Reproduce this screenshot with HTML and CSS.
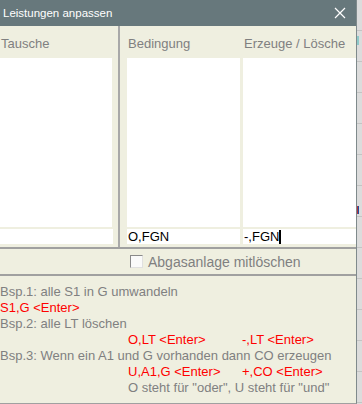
FILE: index.html
```html
<!DOCTYPE html>
<html lang="de">
<head>
    <meta charset="UTF-8">
    <title>Leistungen anpassen</title>
    <link rel="stylesheet" href="styles.css">
</head>
<body>
    <div class="screen">
        <div class="dialog">
            <div class="titlebar">
                <span class="title">Leistungen anpassen</span>
                <svg class="close" width="12" height="12" viewBox="0 0 12 12">
                    <path d="M1 1L11 11M11 1L1 11" stroke="#fff" stroke-width="1.2" fill="none"/>
                </svg>
            </div>

            <div class="panes">
                <div class="pane-left">
                    <div class="label">Tausche</div>
                    <div class="list list-left"></div>
                    <div class="field field-left"></div>
                </div>
                <div class="divider"></div>
                <div class="pane-right">
                    <div class="column">
                        <div class="label">Bedingung</div>
                        <div class="list"></div>
                        <div class="field">O,FGN</div>
                    </div>
                    <div class="column">
                        <div class="label">Erzeuge / Lösche</div>
                        <div class="list"></div>
                        <div class="field">-,FGN<span class="caret"></span></div>
                    </div>
                </div>
            </div>

            <div class="check-row">
                <span class="checkbox"></span>
                <span class="check-label">Abgasanlage mitlöschen</span>
            </div>

            <div class="help">
                <div class="line">Bsp.1: alle S1 in G umwandeln</div>
                <div class="line red">S1,G &lt;Enter&gt;</div>
                <div class="line">Bsp.2: alle LT löschen</div>
                <div class="line indent red">
                    <span class="cell">O,LT &lt;Enter&gt;</span>
                    <span class="cell">-,LT &lt;Enter&gt;</span>
                </div>
                <div class="line">Bsp.3: Wenn ein A1 und G vorhanden dann CO erzeugen</div>
                <div class="line indent red">
                    <span class="cell">U,A1,G &lt;Enter&gt;</span>
                    <span class="cell">+,CO &lt;Enter&gt;</span>
                </div>
                <div class="line indent">O steht für "oder", U steht für "und"</div>
            </div>
        </div>
        <div class="backdrop">
            <div class="bd-mark teal"></div>
            <div class="bd-mark mark-red"></div>
        </div>
    </div>
</body>
</html>
```
FILE: styles.css
```css
body {
    margin: 0;
    font-family: "Liberation Sans", Arial, sans-serif;
    font-size: 13px;
    background: #d9d9d9;
}

.screen {
    display: flex;
    height: 404px;
    overflow: hidden;
}

.dialog {
    width: 356px;
    height: 403px;
    background: #efefe0;
    border-right: 1px solid #7f8a8c;
    border-bottom: 1px solid #a0a0a0;
    display: flex;
    flex-direction: column;
}

.titlebar {
    height: 26px;
    background: #67787c;
    display: flex;
    align-items: center;
    justify-content: space-between;
    padding: 0 10px 0 3px;
}

.title {
    color: #fff;
    font-size: 11.5px;
}

.close {
    display: block;
}

.panes {
    display: flex;
    height: 221px;
}

.pane-left {
    width: 118px;
    display: flex;
    flex-direction: column;
}

.divider {
    width: 2px;
    background: #a8a8a8;
}

.pane-right {
    flex: 1;
    display: flex;
    gap: 3px;
    padding-left: 7px;
}

.column {
    width: 113px;
    display: flex;
    flex-direction: column;
}

.label {
    color: #808080;
    height: 32px;
    line-height: 36px;
    padding-left: 1px;
    white-space: nowrap;
}

.list {
    height: 169px;
    background: #fff;
}

.list-left, .field-left {
    width: 112px;
}

.field {
    height: 15px;
    margin-top: 2px;
    background: #fff;
    color: #000;
    line-height: 16px;
    padding-left: 1px;
    display: flex;
    align-items: center;
}

.caret {
    width: 2px;
    height: 14px;
    background: #000;
}

.check-row {
    height: 25px;
    border-top: 2px solid #a0a0a0;
    border-bottom: 2px solid #a0a0a0;
    display: flex;
    align-items: center;
    padding-left: 130px;
    gap: 5px;
}

.checkbox {
    width: 11px;
    height: 11px;
    background: #fafafa;
    border-top: 1px solid #8a8a8a;
    border-left: 1px solid #8a8a8a;
    border-right: 1px solid #e0e0e0;
    border-bottom: 1px solid #e0e0e0;
}

.check-label {
    color: #808080;
    font-size: 14px;
}

.help {
    padding-top: 8px;
    color: #808080;
}

.line {
    height: 16px;
    line-height: 16px;
    white-space: nowrap;
    display: flex;
}

.indent {
    padding-left: 128px;
}

.cell {
    width: 115px;
}

.red {
    color: #ff0000;
}

.backdrop {
    flex: 1;
    position: relative;
    background: repeating-linear-gradient(#dcdcdc 0 30px, #c4c4c4 30px 31px);
}

.bd-mark {
    position: absolute;
    left: 0;
    width: 2px;
}

.teal {
    top: 36px;
    height: 9px;
    background: #8ec9c9;
}

.mark-red {
    top: 206px;
    height: 8px;
    background: linear-gradient(90deg, #b03040 50%, #2050a0 50%);
}
```
